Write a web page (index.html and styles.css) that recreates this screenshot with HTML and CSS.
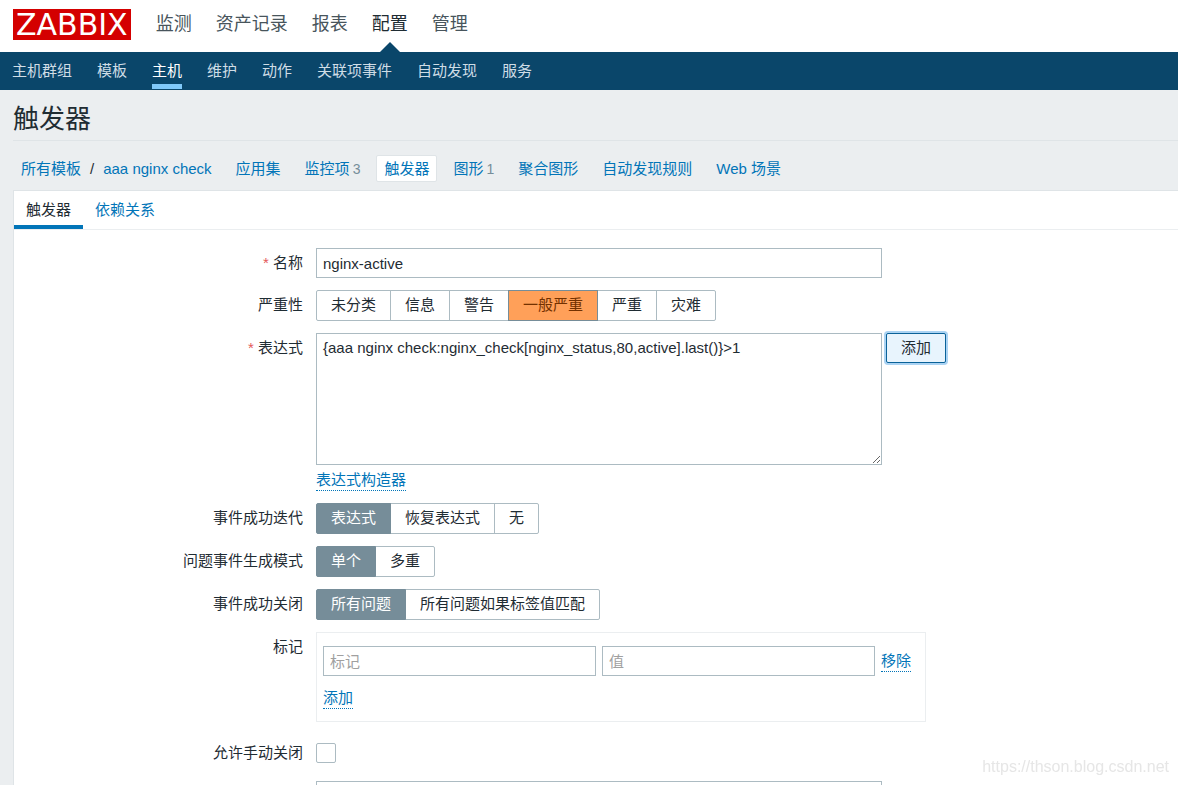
FILE: index.html
```html
<!DOCTYPE html>
<html lang="zh-CN">
<head>
<meta charset="utf-8">
<title>触发器</title>
<link rel="stylesheet" href="styles.css">
</head>
<body>
<header class="top">
  <a class="logo" href="#">ZABBIX</a>
  <nav class="main-nav">
    <a href="#">监测</a>
    <a href="#">资产记录</a>
    <a href="#">报表</a>
    <a href="#" class="selected">配置</a>
    <a href="#">管理</a>
  </nav>
</header>
<nav class="sub-nav">
  <a href="#">主机群组</a>
  <a href="#">模板</a>
  <a href="#" class="selected">主机</a>
  <a href="#">维护</a>
  <a href="#">动作</a>
  <a href="#">关联项事件</a>
  <a href="#">自动发现</a>
  <a href="#">服务</a>
</nav>
<main class="page">
  <h1 class="title">触发器</h1>
  <nav class="crumbs">
    <span class="path"><a href="#">所有模板</a><span>/</span><a href="#">aaa nginx check</a></span>
    <span class="crumb"><a href="#">应用集</a></span>
    <span class="crumb"><a href="#">监控项</a><sup>3</sup></span>
    <span class="crumb selected"><a href="#">触发器</a></span>
    <span class="crumb"><a href="#">图形</a><sup>1</sup></span>
    <span class="crumb"><a href="#">聚合图形</a></span>
    <span class="crumb"><a href="#">自动发现规则</a></span>
    <span class="crumb"><a href="#">Web 场景</a></span>
  </nav>
  <div class="panel">
    <nav class="tabs">
      <a href="#" class="selected">触发器</a>
      <a href="#">依赖关系</a>
    </nav>
    <form class="form">
      <label class="name required" for="name">名称</label>
      <div class="field"><input class="box wide" id="name" type="text" value="nginx-active"></div>

      <span class="name" id="severity">严重性</span>
      <div class="segments" role="radiogroup" aria-labelledby="severity">
        <label><input type="radio" name="severity">未分类</label>
        <label><input type="radio" name="severity">信息</label>
        <label><input type="radio" name="severity">警告</label>
        <label class="average"><input type="radio" name="severity" checked>一般严重</label>
        <label><input type="radio" name="severity">严重</label>
        <label><input type="radio" name="severity">灾难</label>
      </div>

      <label class="name required" for="expression">表达式</label>
      <div class="field">
        <div class="line">
          <textarea class="box wide expression" id="expression">{aaa nginx check:nginx_check[nginx_status,80,active].last()}&gt;1</textarea>
          <button class="add" type="button">添加</button>
        </div>
        <button class="action" type="button">表达式构造器</button>
      </div>

      <span class="name" id="recovery">事件成功迭代</span>
      <div class="segments" role="radiogroup" aria-labelledby="recovery">
        <label><input type="radio" name="recovery" checked>表达式</label>
        <label><input type="radio" name="recovery">恢复表达式</label>
        <label><input type="radio" name="recovery">无</label>
      </div>

      <span class="name" id="mode">问题事件生成模式</span>
      <div class="segments" role="radiogroup" aria-labelledby="mode">
        <label><input type="radio" name="mode" checked>单个</label>
        <label><input type="radio" name="mode">多重</label>
      </div>

      <span class="name" id="closes">事件成功关闭</span>
      <div class="segments" role="radiogroup" aria-labelledby="closes">
        <label><input type="radio" name="closes" checked>所有问题</label>
        <label><input type="radio" name="closes">所有问题如果标签值匹配</label>
      </div>

      <span class="name">标记</span>
      <div class="tags">
        <div class="tag-row">
          <input class="box" type="text" placeholder="标记" aria-label="标记">
          <input class="box" type="text" placeholder="值" aria-label="值">
          <button class="action" type="button">移除</button>
        </div>
        <button class="action" type="button">添加</button>
      </div>

      <label class="name" for="manual">允许手动关闭</label>
      <div class="check-line"><input class="check" id="manual" type="checkbox"></div>

      <span class="name"></span>
      <div class="field"><textarea class="box wide expression" aria-label="描述"></textarea></div>
    </form>
  </div>
</main>
<div class="watermark">https://thson.blog.csdn.net</div>
</body>
</html>
```
FILE: styles.css
```css
* {
  box-sizing: border-box;
}

html {
  scrollbar-width: none;
}

body {
  margin: 0;
  background: #ebeef0;
  color: #1f2c33;
  font: 15px/20px "Liberation Sans", "Noto Sans CJK SC", sans-serif;
}

a {
  color: #0275b8;
  text-decoration: none;
}

input,
textarea,
button {
  margin: 0;
  color: inherit;
  font: inherit;
}

.top {
  display: flex;
  align-items: flex-start;
  gap: 25px;
  height: 52px;
  padding: 9px 13px 0;
  background: #fff;
}

.logo {
  padding: 0 3px;
  background: #d40000;
  color: #fff;
  font: 30px/31px "DejaVu Sans", sans-serif;
}

.main-nav {
  display: flex;
  gap: 24px;
  align-self: stretch;
}

.main-nav a {
  position: relative;
  color: #48555c;
  font-size: 18px;
  line-height: 31px;
}

.main-nav .selected {
  color: #1f2c33;
}

.main-nav .selected::after {
  content: "";
  position: absolute;
  bottom: 0;
  left: 50%;
  margin-left: -10px;
  border: solid transparent;
  border-width: 0 10px 10px;
  border-bottom-color: #0a466a;
}

.sub-nav {
  display: flex;
  gap: 25px;
  height: 38px;
  padding: 0 12px 1px;
  background: #0a466a;
}

.sub-nav a {
  border-bottom: 5px solid transparent;
  color: #cfdde6;
  line-height: 37px;
}

.sub-nav .selected {
  border-color: #80c8f8;
  color: #fff;
}

.page {
  padding-left: 13px;
}

.title {
  margin: 0;
  padding: 14px 0 6px;
  border-bottom: 1px solid #dfe4e7;
  font-size: 26px;
  font-weight: 400;
  line-height: 30px;
}

.crumbs {
  display: flex;
  gap: 8px;
  padding: 14px 0 8px;
}

.path,
.crumb {
  display: flex;
  padding: 3px 7px 2px;
  border: 1px solid transparent;
}

.path {
  gap: 9px;
}

.crumb sup {
  padding-left: 3px;
  color: #768d99;
  font-size: 14px;
  line-height: 20px;
  vertical-align: baseline;
}

.crumb.selected {
  border-color: #dfe4e7;
  border-radius: 2px;
  background: #fff;
}

.panel {
  border: solid #dfe4e7;
  border-width: 1px 0 0 1px;
  background: #fff;
}

.tabs {
  display: flex;
  border-bottom: 1px solid #ebeef0;
}

.tabs a {
  padding: 9px 12px 5px;
  border-bottom: 4px solid transparent;
}

.tabs .selected {
  border-color: #0275b8;
  color: #1f2c33;
}

.form {
  display: grid;
  grid-template-columns: 289px minmax(0, 1fr);
  gap: 12px 13px;
  padding: 18px 0 12px;
}

.name {
  padding-top: 5px;
  text-align: right;
}

.required::before {
  content: "* ";
  color: #e45959;
}

.box {
  height: 30px;
  padding: 0 6px;
  border: 1px solid #acbbc2;
  border-radius: 0;
  background: #fff;
  outline: 0;
}

.box::placeholder {
  color: #a0a0a0;
}

.wide {
  display: block;
  width: 566px;
}

.expression {
  height: 132px;
  padding: 4px 6px;
}

.line {
  display: flex;
  align-items: flex-start;
  gap: 4px;
  margin-bottom: 5px;
}

.add {
  height: 30px;
  padding: 0 14px;
  border: 1px solid #0a6299;
  border-radius: 2px;
  background: #e8f4fd;
  box-shadow: 0 0 0 2px #abd3f3;
}

.action {
  display: block;
  padding: 0;
  border: 0;
  border-bottom: 1px dotted #0275b8;
  background: none;
  color: #0275b8;
}

.segments {
  display: flex;
}

.segments label {
  position: relative;
  height: 31px;
  padding: 4px 14px;
  border: 1px solid #acbbc2;
}

.segments label + label {
  margin-left: -1px;
}

.segments label:first-child {
  border-radius: 2px 0 0 2px;
}

.segments label:last-child {
  border-radius: 0 2px 2px 0;
}

.segments input {
  position: absolute;
  opacity: 0;
}

.segments label:has(:checked) {
  z-index: 1;
  border-color: #768d99;
  background: #768d99;
  color: #fff;
}

.segments .average:has(:checked) {
  background: #ffa059;
  color: #733100;
}

.tags {
  justify-self: start;
  width: 610px;
  margin-bottom: 4px;
  padding: 13px 14px 12px 6px;
  border: 1px solid #ebeef0;
}

.tag-row {
  display: flex;
  align-items: center;
  gap: 6px;
  margin-bottom: 12px;
}

.tag-row .box {
  flex: 1;
  min-width: 0;
}

.check-line {
  height: 31px;
  padding-top: 5px;
}

.check {
  display: block;
  width: 20px;
  height: 20px;
  border: 1px solid #acbbc2;
  border-radius: 2px;
  background: #fff;
  appearance: none;
}

.watermark {
  position: fixed;
  right: 9px;
  bottom: 8px;
  color: #e6e6e6;
  font-size: 16px;
}
```
